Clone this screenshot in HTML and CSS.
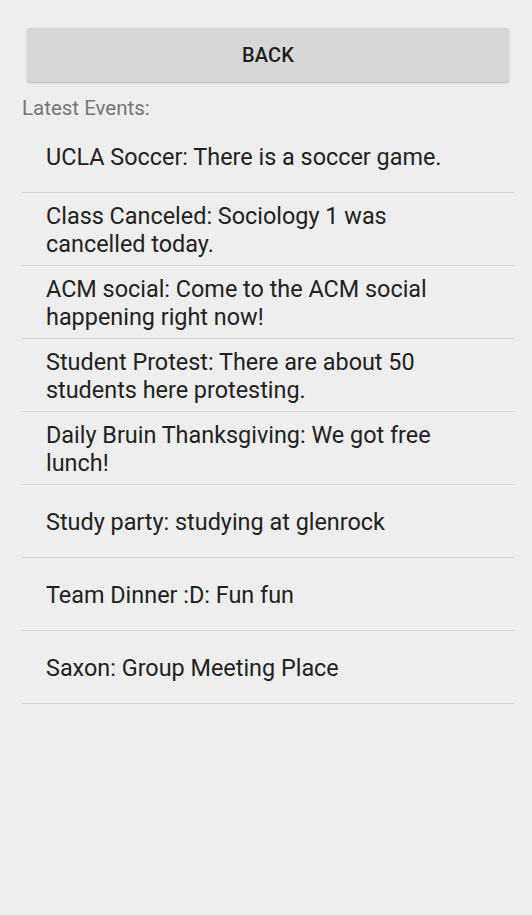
FILE: index.html
```html
<!DOCTYPE html>
<html lang="en">
<head>
    <meta charset="UTF-8">
    <meta name="viewport" content="width=device-width, initial-scale=1.0">
    <title>Latest Events</title>
    <link rel="stylesheet" href="styles.css">
</head>
<body>
    <div class="screen">
        <button class="back-button" type="button">BACK</button>
        <div class="section-label">Latest Events:</div>
        <ul class="event-list">
            <li class="event-item">UCLA Soccer: There is a soccer game.</li>
            <li class="event-item">Class Canceled: Sociology 1 was cancelled today.</li>
            <li class="event-item">ACM social: Come to the ACM social happening right now!</li>
            <li class="event-item">Student Protest: There are about 50 students here protesting.</li>
            <li class="event-item">Daily Bruin Thanksgiving: We got free lunch!</li>
            <li class="event-item">Study party: studying at glenrock</li>
            <li class="event-item">Team Dinner :D: Fun fun</li>
            <li class="event-item">Saxon: Group Meeting Place</li>
        </ul>
    </div>
</body>
</html>
```

FILE: styles.css
```css
html, body {
    margin: 0;
    padding: 0;
    height: 100%;
}

body {
    font-family: Roboto, "Noto Sans", sans-serif;
    background-color: #eeeeee;
    color: #212121;
}

.screen {
    padding: 22px 18px 22px 22px;
}

.back-button {
    display: block;
    width: calc(100% - 10px);
    height: 54px;
    margin: 6px 5px 0 5px;
    background-color: #d6d7d7;
    color: #1f1f1f;
    border: none;
    border-radius: 3px;
    box-shadow: 0 1px 2px rgba(0, 0, 0, 0.25);
    font-family: Roboto, sans-serif;
    font-weight: 500;
    font-size: 20px;
    letter-spacing: 0.2px;
    padding: 0;
}

.section-label {
    margin-top: 15px;
    font-size: 20.5px;
    line-height: 22px;
    color: #777777;
}

.event-list {
    list-style: none;
    margin: 1px 0 0 0;
    padding: 0;
}

.event-item {
    display: flex;
    align-items: center;
    min-height: 73px;
    box-sizing: border-box;
    padding: 9px 30px 7px 24px;
    border-bottom: 1px solid #d2d2d2;
    font-size: 23.4px;
    line-height: 28px;
    color: #222222;
}
```
